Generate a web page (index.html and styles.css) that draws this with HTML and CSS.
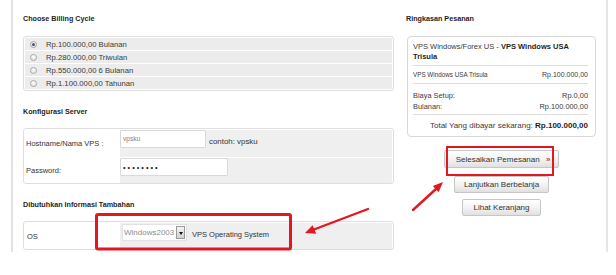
FILE: index.html
```html
<!DOCTYPE html>
<html lang="id">
<head>
<meta charset="utf-8">
<title>Order</title>
<link rel="stylesheet" href="styles.css">
</head>
<body>
<div class="page">
  <div class="col-left">
    <h3 class="sec-title">Choose Billing Cycle</h3>
    <div class="box billing">
      <div class="brow"><span class="radio checked"></span><span>Rp.100.000,00 Bulanan</span></div>
      <div class="brow"><span class="radio"></span><span>Rp.280.000,00 Triwulan</span></div>
      <div class="brow"><span class="radio"></span><span>Rp.550.000,00 6 Bulanan</span></div>
      <div class="brow"><span class="radio"></span><span>Rp.1.100.000,00 Tahunan</span></div>
    </div>

    <h3 class="sec-title gap-top">Konfigurasi Server</h3>
    <div class="box form">
      <div class="frow row-host">
        <div class="flabel">Hostname/Nama VPS :</div>
        <div class="ffield">
          <span class="input input-host">vpsku</span>
          <span class="hint">contoh: vpsku</span>
        </div>
      </div>
      <div class="frow row-pass">
        <div class="flabel">Password:</div>
        <div class="ffield">
          <span class="input input-pass">••••••••</span>
        </div>
      </div>
    </div>

    <h3 class="sec-title gap-top">Dibutuhkan Informasi Tambahan</h3>
    <div class="box form extra">
      <div class="frow row-os">
        <div class="flabel label-os">OS</div>
        <div class="ffield">
          <span class="select"><span class="select-text">Windows2003</span><span class="select-arrow"></span></span>
          <span class="hint hint-os">VPS Operating System</span>
        </div>
      </div>
    </div>
  </div>

  <div class="col-right">
    <h3 class="sec-title">Ringkasan Pesanan</h3>
    <div class="summary">
      <div class="sum-title">
        <div class="sum-line">VPS Windows/Forex US - <b>VPS Windows USA</b></div>
        <div class="sum-line"><b>Trisula</b></div>
      </div>
      <div class="sum-item"><span class="item-name">VPS Windows USA Trisula</span><span class="item-price">Rp.100.000,00</span></div>
      <div class="sum-fees">
        <div class="fee"><span>Biaya Setup:</span><span>Rp.0,00</span></div>
        <div class="fee"><span>Bulanan:</span><span>Rp.100.000,00</span></div>
      </div>
      <div class="sum-total">Total Yang dibayar sekarang: <b>Rp.100.000,00</b></div>
    </div>
    <div class="actions">
      <button class="btn btn-checkout">Selesaikan Pemesanan <span class="raquo">»</span></button>
      <button class="btn btn-continue">Lanjutkan Berbelanja</button>
      <button class="btn btn-cart">Lihat Keranjang</button>
    </div>
  </div>
</div>

<svg class="annot" width="616" height="275" viewBox="0 0 616 275" xmlns="http://www.w3.org/2000/svg">
  <rect x="447" y="147" width="106" height="28" fill="none" stroke="#e3171f" stroke-width="2"/>
  <rect x="96.5" y="214.5" width="194" height="34.5" rx="1.5" fill="none" stroke="#e3171f" stroke-width="3"/>
  <line x1="413" y1="210" x2="436" y2="189" stroke="#e3171f" stroke-width="2.4" stroke-linecap="round"/>
  <polygon points="443,182 438.6,192.2 432.8,186" fill="#e3171f"/>
  <line x1="368" y1="209" x2="314" y2="229.5" stroke="#e3171f" stroke-width="2.4" stroke-linecap="round"/>
  <polygon points="305,233 312.6,225.2 316.2,233.8" fill="#e3171f"/>
</svg>
</body>
</html>
```

FILE: styles.css
```css
* { box-sizing: border-box; }

html, body {
  margin: 0;
  padding: 0;
  background: #ffffff;
}

body {
  font-family: "Liberation Sans", Arial, sans-serif;
  color: #333;
  width: 616px;
  height: 275px;
  position: relative;
  overflow: hidden;
}

.page {
  margin-left: 11px;
  width: 597px;
  height: 252px;
  border-left: 2px solid #e2e2e2;
  border-right: 2px solid #e6e6e6;
  padding: 13px 10px 0 10px;
  display: flex;
  gap: 12px;
}

.col-left {
  width: 371px;
  flex: none;
}

.col-right {
  width: 190px;
  flex: none;
}

.sec-title {
  margin: 0 0 11px 0;
  height: 12px;
  line-height: 12px;
  font-size: 7.2px;
  font-weight: bold;
  color: #1e1e1e;
}

.sec-title.gap-top {
  margin-top: 15px;
  margin-bottom: 10px;
}

.box {
  border: 1px solid #dedede;
  border-radius: 3px;
  padding: 1px;
  background: #fff;
}

/* billing */
.billing .brow {
  display: flex;
  align-items: center;
  height: 12px;
  background: #ececec;
  font-size: 7.7px;
  color: #3a3a3a;
}

.billing .brow + .brow {
  margin-top: 1px;
}

.radio {
  width: 7px;
  height: 7px;
  border-radius: 50%;
  border: 1px solid #a9a9a9;
  background: radial-gradient(circle at 50% 35%, #ffffff 0%, #dcdcdc 100%);
  margin: 0 9px 0 5px;
  flex: none;
  position: relative;
}

.radio.checked::after {
  content: "";
  position: absolute;
  left: 1px;
  top: 1px;
  width: 3px;
  height: 3px;
  border-radius: 50%;
  background: #3c5783;
}

/* forms */
.form {
  padding: 1px 1px 0 1px;
}

.frow {
  display: grid;
  grid-template-columns: 95px 1fr;
}

.frow + .frow {
  margin-top: 1px;
}

.row-host { height: 27px; }
.row-pass { height: 25px; }
.row-os { height: 26px; }

.flabel {
  background: #fff;
  display: flex;
  align-items: center;
  padding-left: 1px;
  font-size: 7.5px;
  color: #333;
}

.label-os {
  padding-left: 2px;
}

.ffield {
  background: #efefef;
  display: flex;
  align-items: flex-start;
}

.input {
  display: block;
  height: 18px;
  background: #fff;
  border: 1px solid #d9d9d9;
  border-radius: 1px;
  padding: 3px 0 0 2px;
  line-height: 10px;
  flex: none;
}

.input-host {
  width: 86px;
  font-size: 6.6px;
  color: #858585;
}

.input-pass {
  width: 108px;
  font-size: 7.4px;
  letter-spacing: 2px;
  color: #222;
  padding-top: 4px;
}

.hint {
  margin: 7px 0 0 3px;
  line-height: 10px;
  font-size: 7.9px;
  color: #333;
}

.select {
  display: flex;
  align-items: center;
  margin: 1px 0 0 2px;
  height: 17px;
  width: 65px;
  background: #fff;
  border: 1px solid #e2e2e2;
  flex: none;
}

.select-text {
  font-size: 8px;
  color: #8c8c8c;
  padding-left: 1px;
  flex: 1;
}

.select-arrow {
  width: 9px;
  height: 13px;
  margin-right: 1px;
  border: 1px solid #9a9a9a;
  background: linear-gradient(#f4f4f4, #d0d0d0);
  position: relative;
  flex: none;
}

.select-arrow::after {
  content: "";
  position: absolute;
  left: 2px;
  top: 5px;
  border-left: 2.5px solid transparent;
  border-right: 2.5px solid transparent;
  border-top: 3px solid #111;
}

.hint-os {
  margin: 7px 0 0 5px;
  font-size: 7.5px;
}

/* summary */
.summary {
  margin-left: 1px;
  width: 189px;
  border: 1px solid #d8d8d8;
  border-radius: 4px;
  padding: 5px 7px 5px 5px;
  color: #3a3a3a;
}

.sum-title {
  font-size: 7.5px;
  padding-bottom: 3px;
  border-bottom: 1px solid #dddddd;
  color: #3a3a3a;
}

.sum-line {
  height: 10px;
  line-height: 10px;
  white-space: nowrap;
}

.sum-title b {
  color: #1e1e1e;
}

.sum-item {
  display: flex;
  justify-content: space-between;
  align-items: baseline;
  line-height: 10px;
  padding: 4px 0 3px;
  border-bottom: 1px solid #dddddd;
}

.item-name {
  font-size: 6.3px;
}

.item-price {
  font-size: 7px;
}

.sum-fees {
  padding: 6px 0 2px;
  border-bottom: 1px solid #dddddd;
}

.fee {
  display: flex;
  justify-content: space-between;
  line-height: 11px;
  font-size: 7.4px;
}

.sum-total {
  padding-top: 5px;
  line-height: 11px;
  font-size: 8px;
  text-align: right;
  color: #3a3a3a;
}

.sum-total b {
  color: #1e1e1e;
}

/* buttons */
.actions {
  margin-top: 13px;
  display: flex;
  flex-direction: column;
  align-items: center;
  padding-left: 1px;
}

.btn {
  font-family: "Liberation Sans", Arial, sans-serif;
  font-size: 8px;
  color: #333;
  height: 17px;
  line-height: 15px;
  border: 1px solid #c6c6c6;
  border-radius: 2px;
  background: linear-gradient(#ffffff 0%, #f3f3f3 50%, #e0e0e0 100%);
  margin: 0;
  cursor: pointer;
}

.btn-checkout {
  height: 18px;
  padding: 0 8px 0 11px;
}

.raquo {
  margin-left: 4px;
}

.btn-continue {
  margin-top: 8px;
  padding: 0 9px;
}

.btn-cart {
  margin-top: 6px;
  padding: 0 10px;
}

/* annotation overlay */
.annot {
  position: absolute;
  left: 0;
  top: 0;
  pointer-events: none;
}
```
